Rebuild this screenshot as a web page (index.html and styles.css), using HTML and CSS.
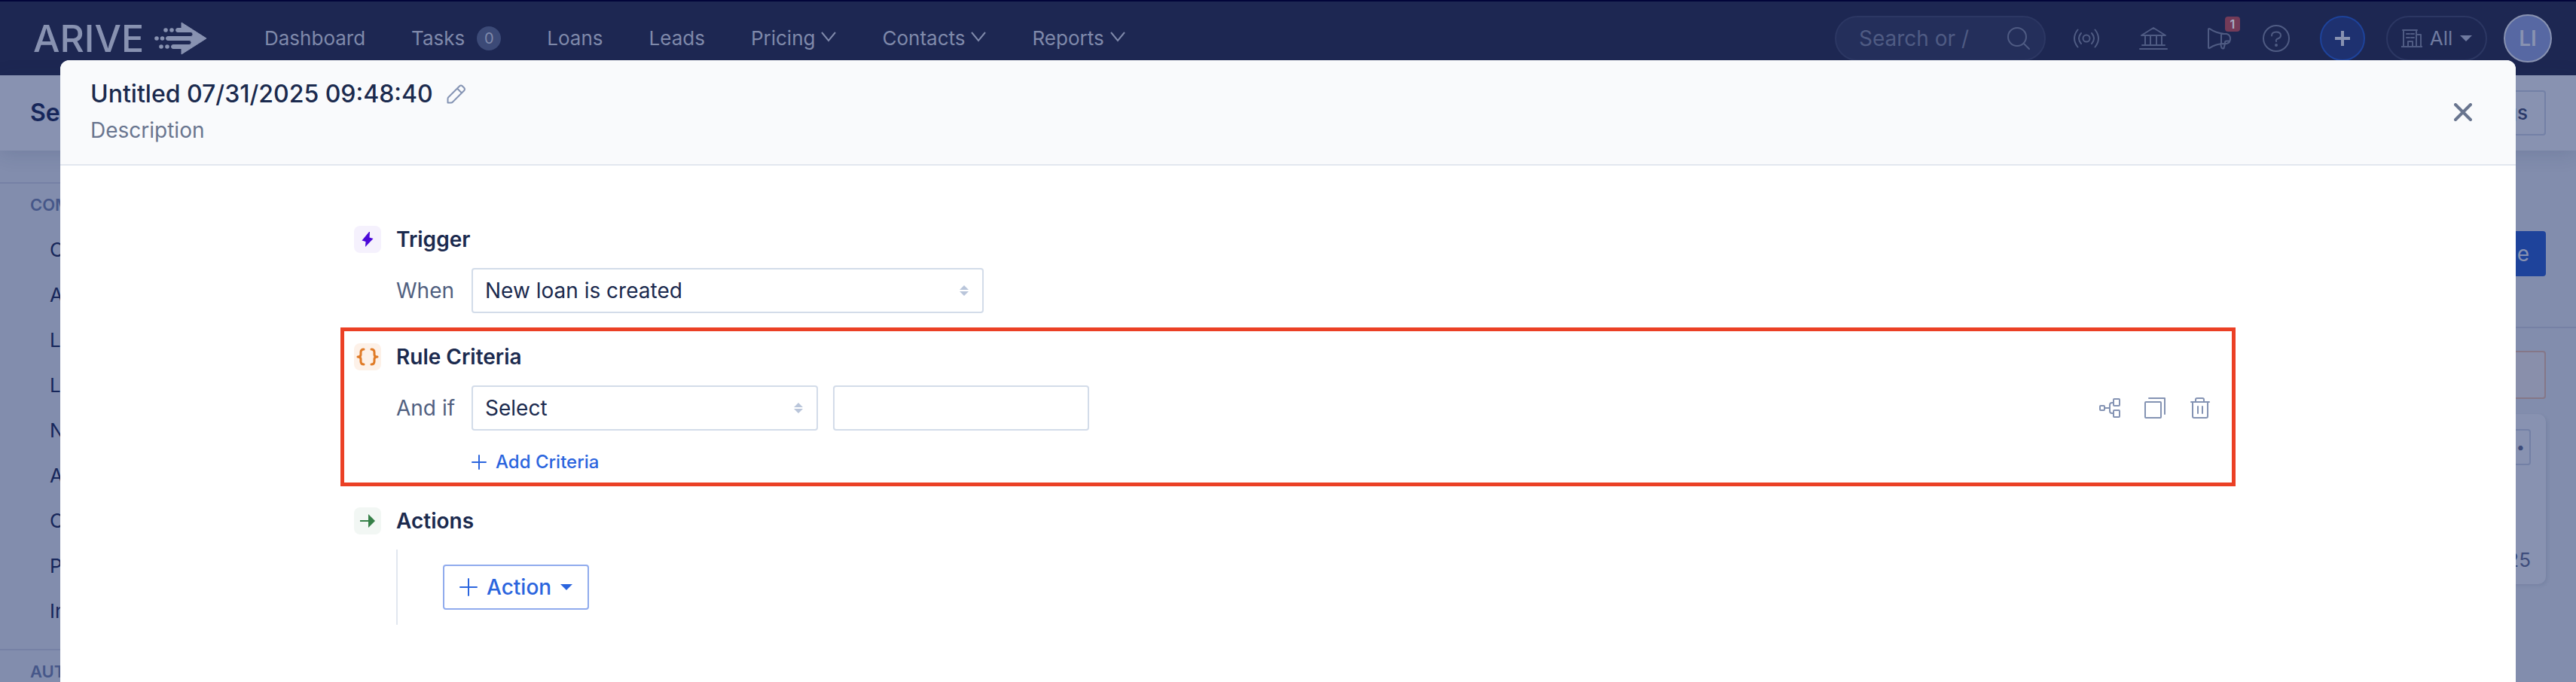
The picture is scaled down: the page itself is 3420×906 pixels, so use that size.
FILE: index.html
```html
<!DOCTYPE html>
<html lang="en">
<head>
    <meta charset="UTF-8">
    <meta name="viewport" content="width=device-width, initial-scale=1.0">
    <title>ARIVE - Automation Rule</title>
    <link rel="stylesheet" href="styles.css">
</head>
<body>
    <!-- Top navigation -->
    <header class="topbar">
        <a class="logo" href="#">
            <span class="logo-text">ARIVE</span>
            <svg class="logo-mark" viewBox="0 0 70 44" width="70" height="44">
                <path fill="currentColor" stroke="currentColor" stroke-linejoin="round" d="M36 1L69 22L36 43V35.500H25a2.500 2.500 0 0 1 0-5H46a3 3 0 0 0 0-6H18a2.500 2.500 0 0 1 0-5H48a3 3 0 0 0 0-6H31a2.500 2.500 0 0 1 0-5H36z"/>
                <g fill="currentColor">
                    <circle cx="15" cy="11" r="2.800"/><circle cx="23" cy="11" r="2.800"/>
                    <circle cx="3" cy="22" r="2.800"/><circle cx="10.500" cy="22" r="2.800"/>
                    <circle cx="9" cy="33" r="2.800"/><circle cx="17" cy="33" r="2.800"/>
                </g>
            </svg>
        </a>
        <nav class="nav">
            <a href="#">Dashboard</a>
            <a href="#">Tasks <span class="count">0</span></a>
            <a href="#">Loans</a>
            <a href="#">Leads</a>
            <a href="#">Pricing <svg class="chev" viewBox="0 0 20 14"><path d="M1 1l9 11 9-11"/></svg></a>
            <a href="#">Contacts <svg class="chev" viewBox="0 0 20 14"><path d="M1 1l9 11 9-11"/></svg></a>
            <a href="#">Reports <svg class="chev" viewBox="0 0 20 14"><path d="M1 1l9 11 9-11"/></svg></a>
        </nav>
        <div class="tools">
            <div class="search">
                <input type="text" placeholder="Search or /" aria-label="Search">
                <svg class="icon" viewBox="0 0 32 32"><circle cx="14" cy="14" r="12"/><path d="M22.500 22.500L30 30"/></svg>
            </div>
            <button class="tool" aria-label="Broadcast">
                <svg class="icon" viewBox="0 0 36 36" width="36" height="36"><circle cx="18" cy="18" r="4.500"/><path d="M11 11q-6 7 0 14M25 11q6 7 0 14M6.500 6.500q-9 11.500 0 23M29.500 6.500q9 11.500 0 23"/></svg>
            </button>
            <button class="tool" aria-label="Lenders">
                <svg class="icon" viewBox="0 0 38 32" width="38" height="32"><path d="M3 12L19 2l16 10zM8 13v12M15 13v12M23 13v12M30 13v12M4 25h30M1 30h36"/></svg>
            </button>
            <button class="tool news" aria-label="Announcements">
                <svg class="icon" viewBox="0 0 32 30" width="32" height="30"><path d="M2 3v24q0 1.500 1.500.8Q12 22 23 22h3q5-1 5-6.500T26 9h-3Q12 8 3.500 2.200Q2 1.500 2 3zM19 9v13M18 22l1.500 5.500q1 1.500 3 .5l1.500-6v-2q0-1.500 2-1.500h4"/></svg>
                <span class="badge">1</span>
            </button>
            <button class="tool" aria-label="Help">
                <svg class="icon" viewBox="0 0 36 36" width="36" height="36"><circle cx="18" cy="18" r="17"/><path d="M12 14.500q0-5 6-5t6 4.500q0 3-3.500 4.200T18 22"/><circle class="solid" cx="18" cy="27" r="1"/></svg>
            </button>
            <button class="add" aria-label="Add">
                <svg viewBox="0 0 20 20" width="20" height="20"><path d="M10 0v20M0 10h20"/></svg>
            </button>
            <button class="branch">
                <svg class="icon" viewBox="0 0 28 26"><path d="M0 24h28M3 24V2h17v22M2 2h19M20 8h6v16M9 24v-7h6v7M7 7h4M13 7h4M7 12h4M13 12h4"/></svg>
                All
                <span class="caret"></span>
            </button>
            <button class="avatar">LI</button>
        </div>
    </header>

    <!-- Settings page behind the dialog -->
    <div class="subhead">
        <h1>Se</h1>
        <button class="outline-btn">All Settings</button>
    </div>
    <div class="page">
        <aside class="sidebar">
            <h2>COMPANY</h2>
            <ul>
                <li><a href="#">Company</a></li>
                <li><a href="#">Access</a></li>
                <li><a href="#">Licenses</a></li>
                <li><a href="#">Loans</a></li>
                <li><a href="#">Notifications</a></li>
                <li><a href="#">Accounts</a></li>
                <li><a href="#">Credit</a></li>
                <li><a href="#">Products</a></li>
                <li><a href="#">Integrations</a></li>
            </ul>
            <h2>AUTOMATION</h2>
        </aside>
        <section class="content">
            <div class="content-head"><button class="create">Create Rule</button></div>
            <div class="content-body">
                <div class="notice"></div>
                <article class="rule">
                    <button class="more" aria-label="More">•••</button>
                    <p>07/31/2025</p>
                </article>
            </div>
        </section>
    </div>

    <!-- Rule editor -->
    <div class="modal" role="dialog" aria-labelledby="ruleTitle">
        <div class="modal-head">
            <div>
                <div class="title-row">
                    <h2 id="ruleTitle">Untitled 07/31/2025 09:48:40</h2>
                    <button class="plain" aria-label="Rename">
                        <svg class="icon" viewBox="0 0 26 26" width="26" height="26"><path d="M2 17.500L17 2.500q2-2 4 0l2 2q2 2 0 4L8 23.500q-1 1-2 1H1.500V19.500q0-1 .5-2zM14 5.500l6 6"/></svg>
                    </button>
                </div>
                <p class="description">Description</p>
            </div>
            <button class="plain close" aria-label="Close">
                <svg class="icon" viewBox="0 0 24 24" width="24" height="24"><path d="M2 2l20 20M22 2L2 22"/></svg>
            </button>
        </div>

        <form class="editor">
            <section class="step trigger">
                <h3><span class="step-icon purple"><svg viewBox="0 0 36 36"><path fill="currentColor" d="M20 8L10.500 19.500l5 1.500-.5 7L25.500 17l-5-1.500L21 8z"/></svg></span>Trigger</h3>
                <div class="row">
                    <label for="when">When</label>
                    <div class="select wide">
                        <select id="when"><option>New loan is created</option></select>
                        <svg class="sorter" viewBox="0 0 12 14"><path d="M0 6l6-6 6 6zM0 8h12l-6 6z"/></svg>
                    </div>
                </div>
            </section>

            <section class="step criteria">
                <h3><span class="step-icon orange"><svg viewBox="0 0 36 36"><path fill="none" stroke="currentColor" stroke-width="3" stroke-linecap="round" stroke-linejoin="round" d="M13 8q-4 0-4 4v3q0 3-4 3q4 0 4 3v3q0 4 4 4M23 8q4 0 4 4v3q0 3 4 3q-4 0-4 3v3q0 4-4 4"/></svg></span>Rule Criteria</h3>
                <div class="row">
                    <label for="field">And if</label>
                    <div class="select">
                        <select id="field"><option>Select</option></select>
                        <svg class="sorter" viewBox="0 0 12 14"><path d="M0 6l6-6 6 6zM0 8h12l-6 6z"/></svg>
                    </div>
                    <input class="value" type="text" aria-label="Value">
                    <div class="row-actions">
                        <button type="button" class="plain" aria-label="Add group">
                            <svg class="icon" viewBox="0 0 28 28" width="28" height="28"><rect x="1" y="11" width="6" height="6" rx="1"/><rect x="19" y="2" width="8" height="9" rx="1"/><rect x="19" y="17" width="8" height="9" rx="1"/><path d="M7 14h7M19 7h-2q-3 0-3 3v8q0 3 3 3h2"/></svg>
                        </button>
                        <button type="button" class="plain" aria-label="Duplicate">
                            <svg class="icon" viewBox="0 0 28 28" width="28" height="28"><rect x="1" y="6" width="21" height="21" rx="1"/><path d="M6 1h21v21"/></svg>
                        </button>
                        <button type="button" class="plain" aria-label="Delete">
                            <svg class="icon" viewBox="0 0 28 28" width="28" height="28"><path d="M2 6h24M8 6V3q0-2 2-2h7q2 0 2 2v3M4 6v19q0 2 2 2h16q2 0 2-2V6M11 12v9M17 12v9"/></svg>
                        </button>
                    </div>
                </div>
                <button type="button" class="plain add-criteria">
                    <svg viewBox="0 0 20 20" width="20" height="20"><path d="M10 1v18M1 10h18"/></svg>
                    Add Criteria
                </button>
            </section>

            <section class="step actions">
                <h3><span class="step-icon green"><svg viewBox="0 0 36 36"><path stroke="currentColor" stroke-width="2" d="M8 18h12"/><path fill="currentColor" d="M19 9l9 9-9 9z"/></svg></span>Actions</h3>
                <div class="action-list">
                    <button type="button" class="action-btn">
                        <svg viewBox="0 0 24 24" width="24" height="24"><path d="M12 1v22M1 12h22"/></svg>
                        Action
                        <span class="caret"></span>
                    </button>
                </div>
            </section>
        </form>
    </div>
</body>
</html>
```

FILE: styles.css
```css
* {
    margin: 0;
    padding: 0;
    box-sizing: border-box;
}

body {
    font-family: Inter, "Liberation Sans", sans-serif;
    font-size: 28px;
    line-height: 40px;
    color: #1b2a4e;
    background: #828dad;
    height: 100vh;
    overflow: hidden;
}

a {
    color: inherit;
    text-decoration: none;
}

button, input, select {
    font: inherit;
    color: inherit;
    background: none;
    border: none;
}

.icon {
    fill: none;
    stroke: currentColor;
    stroke-width: 2;
    stroke-linecap: round;
    stroke-linejoin: round;
}

.icon .solid {
    fill: currentColor;
}

.plain {
    display: flex;
    align-items: center;
}

.caret {
    border: 8px solid transparent;
    border-top-color: currentColor;
    border-bottom: none;
}

/* Top bar */
.topbar {
    display: flex;
    align-items: center;
    height: 100px;
    padding: 0 32px 0 44px;
    background: #1d2752;
    border-top: 2px solid #02053a;
    color: #8892b1;
}

.logo {
    display: flex;
    align-items: center;
    justify-content: space-between;
    width: 231px;
    margin-right: 76px;
}

.logo-text {
    font-size: 50px;
    font-weight: 500;
}

.nav {
    display: flex;
    gap: 61px;
    font-size: 26px;
    color: #7f89aa;
}

.nav a {
    display: flex;
    align-items: center;
    gap: 8px;
}

.count {
    width: 32px;
    height: 32px;
    margin-left: 8px;
    border-radius: 50%;
    background: #3c4a77;
    font-size: 20px;
    line-height: 32px;
    text-align: center;
}

.chev {
    width: 20px;
    height: 14px;
    margin-bottom: 4px;
    fill: none;
    stroke: currentColor;
    stroke-width: 2;
}

.tools {
    display: flex;
    align-items: center;
    margin-left: auto;
    color: #4f5b83;
}

.search {
    display: flex;
    align-items: center;
    width: 280px;
    height: 60px;
    padding: 0 18px 0 30px;
    margin-right: 36px;
    border: 2px solid #2c3763;
    border-radius: 30px;
    background: #242f5b;
}

.search input {
    flex: 1;
    min-width: 0;
}

.search input::placeholder {
    color: #4f5b83;
    opacity: 1;
}

.search .icon {
    width: 32px;
    height: 32px;
}

.tool {
    position: relative;
    display: flex;
    margin-right: 52px;
}

.tool.news {
    margin-right: 42px;
}

.badge {
    position: absolute;
    top: -14px;
    right: -12px;
    width: 20px;
    height: 20px;
    border-radius: 4px;
    background: #743b58;
    color: #a7adc5;
    font-size: 16px;
    font-weight: 600;
    line-height: 20px;
}

.add {
    display: flex;
    align-items: center;
    justify-content: center;
    width: 60px;
    height: 60px;
    margin: 0 28px 0 -12px;
    border: 2px solid #1e439b;
    border-radius: 50%;
    background: #1e3170;
    color: #8892b1;
}

.add svg {
    stroke: currentColor;
    stroke-width: 4;
}

.branch {
    display: flex;
    align-items: center;
    justify-content: space-between;
    width: 134px;
    height: 60px;
    padding: 0 18px;
    margin-right: 22px;
    border: 2px solid #2c3763;
    border-radius: 30px;
    font-size: 26px;
    color: #6f7a9f;
}

.branch .icon {
    width: 28px;
    height: 26px;
    color: #4f5b83;
}

.avatar {
    width: 64px;
    height: 64px;
    border: 2px solid #8892b1;
    border-radius: 50%;
    background: #5768a3;
    color: #8892b1;
    font-weight: 600;
}

/* Settings page */
.subhead {
    display: flex;
    align-items: center;
    justify-content: space-between;
    height: 100px;
    padding: 0 40px;
    background: #8892b1;
    box-shadow: 0 4px 24px rgba(30, 45, 90, 0.15);
}

.subhead h1 {
    font-size: 32px;
    font-weight: 600;
    color: #16265a;
}

.outline-btn {
    height: 60px;
    padding: 0 22px;
    border: 2px solid #7380a6;
    border-radius: 4px;
    font-size: 26px;
    font-weight: 500;
    color: #2b3a69;
}

.page {
    display: flex;
}

.sidebar {
    width: 400px;
    padding-top: 42px;
}

.sidebar h2 {
    padding: 18px 40px 20px;
    border-top: 2px solid #7681a5;
    font-size: 22px;
    font-weight: 600;
    line-height: 20px;
    color: #465789;
}

.sidebar ul {
    list-style: none;
    margin-bottom: 20px;
}

.sidebar li {
    height: 60px;
    padding-left: 66px;
    font-size: 26px;
    line-height: 60px;
    color: #16265a;
}

.content {
    flex: 1;
}

.content-head {
    display: flex;
    align-items: flex-start;
    justify-content: flex-end;
    height: 236px;
    padding: 107px 40px 0;
    border-bottom: 2px solid #7681a5;
}

.create {
    padding: 0 22px;
    height: 60px;
    border-radius: 4px;
    background: #1e439b;
    color: #8892b1;
}

.content-body {
    padding: 30px 40px;
}

.notice {
    height: 64px;
    margin-bottom: 20px;
    border: 2px solid #857788;
    border-radius: 4px;
    background: #898fab;
}

.rule {
    height: 226px;
    padding: 20px;
    border-radius: 10px;
    background: #8892b1;
    box-shadow: 2px 2px 4px rgba(30, 45, 90, 0.1);
    font-size: 26px;
    text-align: right;
    color: #3d4c7b;
}

.more {
    display: block;
    height: 48px;
    padding: 0 6px;
    margin: 0 0 106px auto;
    border: 2px solid #7380a6;
    border-radius: 4px;
    font-size: 20px;
}

/* Rule editor */
.modal {
    position: fixed;
    inset: 80px 80px 0;
    border-radius: 12px 12px 0 0;
    background: #fff;
    overflow: hidden;
}

.modal-head {
    display: flex;
    align-items: center;
    justify-content: space-between;
    height: 140px;
    padding: 0 58px 0 40px;
    border-bottom: 2px solid #e2e7ef;
    background: #f9fafc;
}

.title-row {
    display: flex;
    align-items: center;
    gap: 18px;
    margin-bottom: 8px;
    color: #8493b3;
}

.title-row h2 {
    font-size: 32px;
    font-weight: 500;
    color: #1b2a4e;
}

.description {
    color: #69758f;
}

.close {
    color: #69758f;
}

.close .icon {
    stroke-width: 4;
}

.editor {
    padding: 74px 372px 0;
}

.step {
    padding-left: 74px;
}

.step h3 {
    display: flex;
    align-items: center;
    gap: 20px;
    height: 48px;
    margin-left: -56px;
    font-size: 28px;
    font-weight: 600;
}

.step-icon {
    width: 36px;
    height: 36px;
    border-radius: 8px;
}

.step-icon svg {
    display: block;
}

.purple {
    background: #f5f1fd;
    color: #4b08d9;
}

.orange {
    background: #fdf1e8;
    color: #e07b27;
}

.green {
    background: #f2f7f4;
    color: #368048;
}

.row {
    display: flex;
    align-items: center;
    height: 60px;
    margin-top: 14px;
}

.row label {
    width: 100px;
    color: #506080;
}

.select {
    position: relative;
    width: 460px;
    height: 60px;
}

.select.wide {
    width: 680px;
}

.select select {
    appearance: none;
    width: 100%;
    height: 100%;
    padding: 0 48px 0 16px;
    background: #fff;
}

.select select, .value {
    border: 2px solid #d3dce9;
    border-radius: 4px;
}

.sorter {
    position: absolute;
    top: 23px;
    right: 20px;
    width: 12px;
    height: 14px;
    fill: #b9c5da;
}

.value {
    width: 340px;
    height: 60px;
    padding: 0 16px;
    margin-left: 20px;
}

.row-actions {
    display: flex;
    gap: 32px;
    margin-left: auto;
    color: #8493b3;
}

.trigger {
    padding-bottom: 19px;
}

.criteria {
    height: 211px;
    padding: 10px 28px 0 69px;
    border: 5px solid #eb4025;
}

.add-criteria {
    gap: 12px;
    margin: 22px 0 0 100px;
    font-size: 24px;
    font-weight: 500;
    color: #2b65de;
}

.add-criteria svg, .action-btn svg {
    stroke: currentColor;
    stroke-width: 2;
    stroke-linecap: round;
}

.actions {
    padding-top: 22px;
}

.action-list {
    padding: 20px 0 20px 60px;
    margin-top: 14px;
    border-left: 2px solid #e2e7ef;
}

.action-btn {
    display: flex;
    align-items: center;
    gap: 12px;
    height: 60px;
    padding: 0 20px;
    border: 2px solid #90abed;
    border-radius: 4px;
    font-weight: 500;
    color: #2b65de;
}
```
